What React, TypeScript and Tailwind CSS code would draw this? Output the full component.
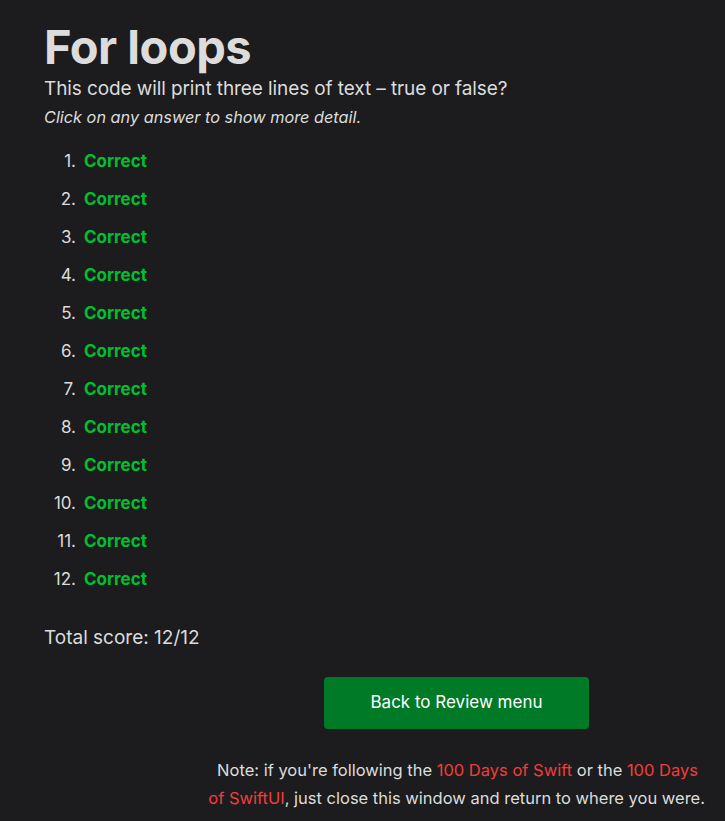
import React from 'react';

const answers = Array.from({ length: 12 }, (_, i) => i + 1);

export default function App() {
  return (
    <div className="min-h-screen bg-[#1c1c1e] text-[#dcdcdc] font-['Inter',sans-serif]">
      <div className="pl-[44px] pr-[20px] pt-[19px] pb-[10px]">
        {/* Header */}
        <h1 className="text-[47px] font-bold leading-[56px] tracking-[-0.5px]">For loops</h1>
        <p className="text-[19px] leading-[26px] mt-[1px] tracking-[-0.1px]">This code will print three lines of text – true or false?</p>
        <p className="text-[16.3px] italic leading-[24px] mt-[3px]">Click on any answer to show more detail.</p>

        {/* Answers */}
        <ol className="mt-[14px] flex flex-col">
          {answers.map((n) => (
            <li key={n} className="flex items-center h-[38px] text-[17px]">
              <span className="w-[32px] text-right">{n}.</span>
              <span className="ml-[8px] font-bold text-[#00c032]">Correct</span>
            </li>
          ))}
        </ol>

        <p className="mt-[26px] text-[19px] leading-[26px]">Total score: 12/12</p>

        <div className="mt-[26px] ml-[280px]">
          <button className="w-[265px] h-[52px] rounded-[4px] bg-[#007a27] text-white text-[17px]">
            Back to Review menu
          </button>
        </div>

        <p className="mt-[27px] text-right text-[16.5px] leading-[28px]">
          Note: if you're following the <span className="text-[#f23c3c]">100 Days of Swift</span> or the{' '}
          <span className="text-[#f23c3c] pr-[7px]">100 Days</span>
          <br />
          <span className="text-[#f23c3c]">of SwiftUI</span>, just close this window and return to where you were.
        </p>
      </div>
    </div>
  );
}
